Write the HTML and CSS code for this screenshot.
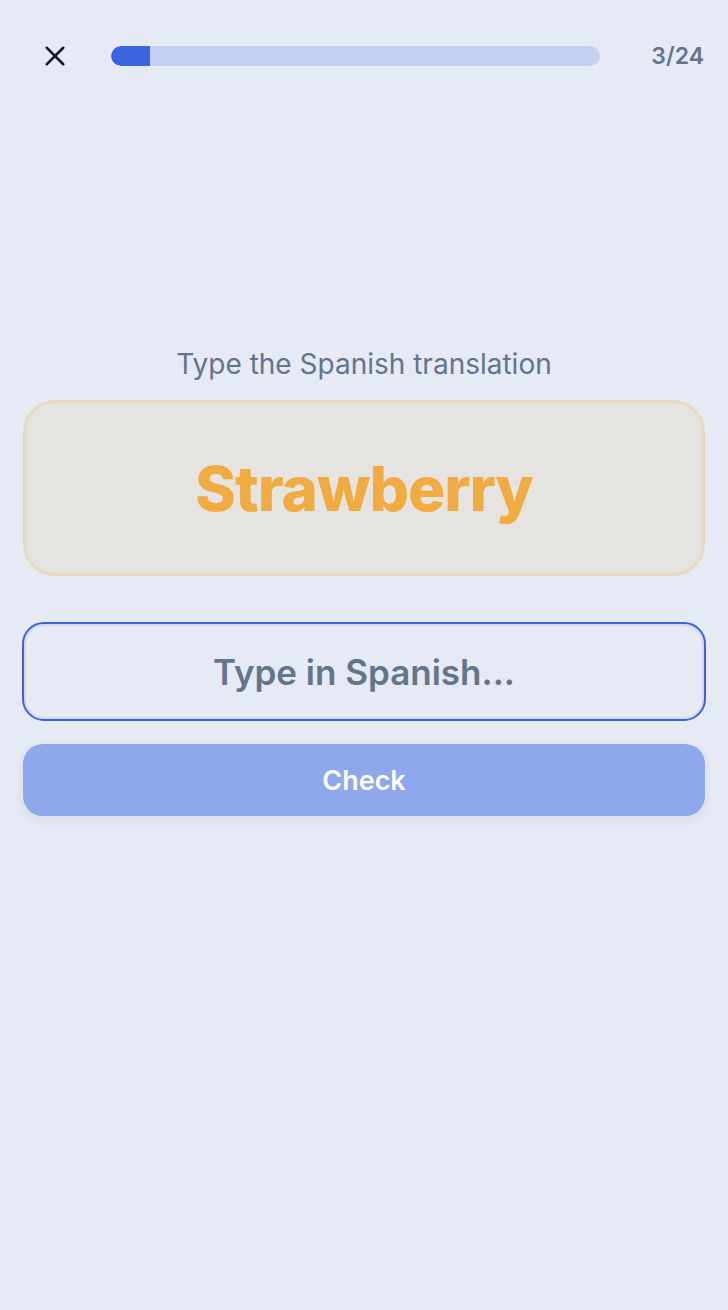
FILE: index.html
```html
<!doctype html>
<html lang="en">
  <head>
    <meta charset="UTF-8" />
    <meta name="viewport" content="width=device-width, initial-scale=1.0" />
    <title>Spanish Practice</title>
    <link rel="stylesheet" href="styles.css">
  </head>
  <body>
    <header class="topBar">
      <button class="closeButton" aria-label="Close">
        <svg width="22" height="22" viewBox="0 0 24 24" fill="none" stroke="#111827" stroke-width="2.8" stroke-linecap="round">
          <path d="M3 3 L21 21 M21 3 L3 21" />
        </svg>
      </button>
      <div class="progress">
        <div class="progressFill" style="width: 8%"></div>
      </div>
      <span class="counter">3/24</span>
    </header>

    <main class="exercise">
      <p class="prompt">Type the Spanish translation</p>
      <div class="wordCard">
        <span class="word">Strawberry</span>
      </div>
      <input type="text" class="answerBox" placeholder="Type in Spanish..." />
      <button class="checkButton">Check</button>
    </main>
  </body>
</html>
```

FILE: styles.css
```css
/* Base Reset & Styles */
* {
  box-sizing: border-box;
  margin: 0;
  padding: 0;
}
body {
  font-family: Inter, "Noto Sans", sans-serif;
  background-color: #e6eaf4;
  color: #64748b;
  min-height: 100vh;
}
.topBar {
  display: flex;
  align-items: center;
  height: 112px;
  padding: 0 24px 0 32px;
}
.closeButton {
  background: none;
  border: none;
  width: 46px;
  height: 46px;
  display: flex;
  align-items: center;
  justify-content: flex-start;
  padding-left: 12px;
  cursor: pointer;
}
.progress {
  flex: 1;
  height: 20px;
  margin: 0 51px 0 33px;
  background-color: #c3d0f2;
  border-radius: 10px;
  overflow: hidden;
}
.progressFill {
  height: 100%;
  background-color: #3b63e0;
  border-radius: 10px 0 0 10px;
}
.counter {
  font-size: 23px;
  font-weight: 600;
  color: #64748b;
}
.exercise {
  display: flex;
  flex-direction: column;
  padding: 234px 22px 0;
}
.prompt {
  text-align: center;
  font-size: 28px;
  line-height: 36px;
  color: #64748b;
  margin-bottom: 18px;
}
.wordCard {
  height: 176px;
  margin: 0 1px;
  border: 3px solid #ecd9bd;
  border-radius: 32px;
  background-color: #e6e4e0;
  display: flex;
  align-items: center;
  justify-content: center;
}
.word {
  font-size: 62px;
  font-weight: 800;
  letter-spacing: -1px;
  color: #f0ac42;
}
.answerBox {
  margin-top: 46px;
  height: 99px;
  border: 2px solid #3b63e0;
  border-radius: 22px;
  background-color: #e6eaf4;
  box-shadow: inset 0 0 0 2px #d3d9e6;
  font-family: Inter, "Noto Sans", sans-serif;
  font-size: 35px;
  font-weight: 600;
  text-align: center;
  color: #334155;
  outline: none;
}
.answerBox::placeholder {
  color: #64748b;
}
.checkButton {
  margin: 23px 1px 0;
  height: 72px;
  border: none;
  border-radius: 20px;
  background-color: #8fa7eb;
  color: #fff;
  font-family: Inter, "Noto Sans", sans-serif;
  font-size: 27px;
  font-weight: 600;
  box-shadow: 0 4px 12px rgba(30, 41, 59, 0.08);
  cursor: pointer;
}
```
